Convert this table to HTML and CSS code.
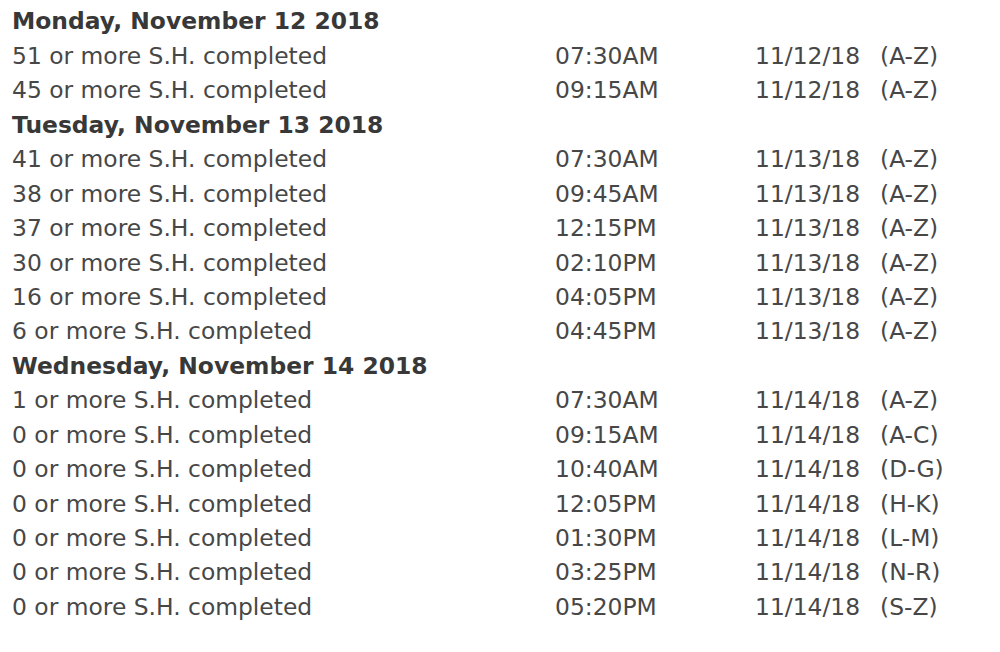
FILE: index.html
```html
<!DOCTYPE html>
<html>
<head>
<meta charset="utf-8">
<link rel="stylesheet" href="styles.css">
</head>
<body>
<div class="page">
  <div class="schedule">
    <div class="row"><span>56 or more S.H. completed</span><span>04:45PM</span><span>11/09/18</span><span>(A-Z)</span></div>

    <div class="day">Monday, November 12 2018</div>
    <div class="row"><span>51 or more S.H. completed</span><span>07:30AM</span><span>11/12/18</span><span>(A-Z)</span></div>
    <div class="row"><span>45 or more S.H. completed</span><span>09:15AM</span><span>11/12/18</span><span>(A-Z)</span></div>

    <div class="day">Tuesday, November 13 2018</div>
    <div class="row"><span>41 or more S.H. completed</span><span>07:30AM</span><span>11/13/18</span><span>(A-Z)</span></div>
    <div class="row"><span>38 or more S.H. completed</span><span>09:45AM</span><span>11/13/18</span><span>(A-Z)</span></div>
    <div class="row"><span>37 or more S.H. completed</span><span>12:15PM</span><span>11/13/18</span><span>(A-Z)</span></div>
    <div class="row"><span>30 or more S.H. completed</span><span>02:10PM</span><span>11/13/18</span><span>(A-Z)</span></div>
    <div class="row"><span>16 or more S.H. completed</span><span>04:05PM</span><span>11/13/18</span><span>(A-Z)</span></div>
    <div class="row"><span>6 or more S.H. completed</span><span>04:45PM</span><span>11/13/18</span><span>(A-Z)</span></div>

    <div class="day">Wednesday, November 14 2018</div>
    <div class="row"><span>1 or more S.H. completed</span><span>07:30AM</span><span>11/14/18</span><span>(A-Z)</span></div>
    <div class="row"><span>0 or more S.H. completed</span><span>09:15AM</span><span>11/14/18</span><span>(A-C)</span></div>
    <div class="row"><span>0 or more S.H. completed</span><span>10:40AM</span><span>11/14/18</span><span>(D-G)</span></div>
    <div class="row"><span>0 or more S.H. completed</span><span>12:05PM</span><span>11/14/18</span><span>(H-K)</span></div>
    <div class="row"><span>0 or more S.H. completed</span><span>01:30PM</span><span>11/14/18</span><span>(L-M)</span></div>
    <div class="row"><span>0 or more S.H. completed</span><span>03:25PM</span><span>11/14/18</span><span>(N-R)</span></div>
    <div class="row"><span>0 or more S.H. completed</span><span>05:20PM</span><span>11/14/18</span><span>(S-Z)</span></div>
  </div>
</div>
</body>
</html>
```

FILE: styles.css
```css
html, body {
  margin: 0;
  padding: 0;
  background: #ffffff;
}

.page {
  width: 1000px;
  height: 652px;
  overflow: hidden;
}

.schedule {
  margin-top: -30px;
  padding-left: 12px;
  font-family: "DejaVu Sans", Verdana, sans-serif;
  font-size: 23.4px;
  color: #474747;
}

.row,
.day {
  height: 34.45px;
  line-height: 34.45px;
  white-space: nowrap;
}

.row {
  display: grid;
  grid-template-columns: 543px 200px 125px auto;
}

.day {
  font-weight: bold;
  color: #383838;
}
```
